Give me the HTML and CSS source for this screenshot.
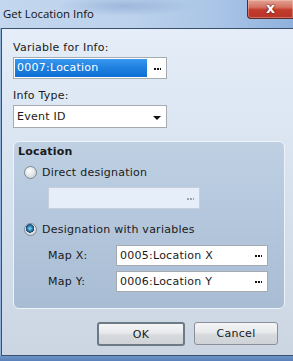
FILE: index.html
```html
<!DOCTYPE html>
<html>
<head>
<meta charset="utf-8">
<link rel="stylesheet" href="styles.css">
</head>
<body>
<div class="window">
  <div class="titlebar">
    <span class="title">Get Location Info</span>
    <div class="close"><span class="x">x</span></div>
  </div>
  <div class="client">
    <div class="label first">Variable for Info:</div>
    <div class="field">
      <span class="sel">0007:Location</span>
      <span class="dots"></span>
    </div>
    <div class="label second">Info Type:</div>
    <div class="field combo">
      <span class="val">Event ID</span>
      <span class="arrow"></span>
    </div>
    <div class="group">
      <div class="gtitle">Location</div>
      <div class="radio-row r1"><span class="radio"></span><span>Direct designation</span></div>
      <div class="field disabled"><span class="val"></span><span class="dots grey"></span></div>
      <div class="radio-row r2"><span class="radio on"></span><span>Designation with variables</span></div>
      <div class="maps">
        <div class="map-row"><span class="mlabel">Map X:</span><div class="field mfield"><span class="val">0005:Location X</span><span class="dots"></span></div></div>
        <div class="map-row"><span class="mlabel">Map Y:</span><div class="field mfield"><span class="val">0006:Location Y</span><span class="dots"></span></div></div>
      </div>
    </div>
    <div class="buttons">
      <div class="btn ok">OK</div>
      <div class="btn cancel">Cancel</div>
    </div>
  </div>
  <div class="bottom"></div>
</div>
</body>
</html>
```

FILE: styles.css
```css
html, body {
  margin: 0;
  padding: 0;
}
body {
  width: 293px;
  height: 361px;
  overflow: hidden;
  background: #8fb1da;
  font-family: "DejaVu Sans", Verdana, sans-serif;
  font-size: 11px;
  color: #1a1a1a;
}
.window {
  display: flex;
  flex-direction: column;
  width: 293px;
  height: 361px;
}
.titlebar {
  height: 28px;
  display: flex;
  align-items: flex-start;
  justify-content: space-between;
  background:
    radial-gradient(ellipse 70px 10px at 125px 6px, rgba(120,150,200,0.45), rgba(120,150,200,0) 100%),
    linear-gradient(90deg, #c3d7ee 0%, #bcd2ec 45%, #a9c4e6 75%, #8fb1dc 100%);
}
.title {
  font-family: "Open Sans", "Noto Sans", sans-serif;
  font-size: 11.4px;
  color: #111;
  margin: 6px 0 0 3px;
  line-height: 16px;
}
.close {
  width: 45px;
  height: 18px;
  border: 1px solid #5a2a28;
  border-top: none;
  border-right: none;
  border-bottom-left-radius: 4px;
  background: linear-gradient(180deg, #e2a394 0%, #d57262 40%, #c23a2b 55%, #b8342a 100%);
  display: flex;
  align-items: center;
  justify-content: center;
  box-shadow: inset 0 0 0 1px rgba(255,220,210,0.35);
}
.x {
  font-family: "DejaVu Sans", sans-serif;
  font-weight: bold;
  font-size: 14px;
  color: #fff;
  line-height: 14px;
  margin-top: -3px;
  text-shadow: 0 0 2px #5a1a10, 0 0 1px #5a1a10;
}
.client {
  margin-left: 1px;
  border-left: 1px solid #3b506c;
  border-top: 1px solid #3b506c;
  border-bottom: 1px solid #3b506c;
  height: 326px;
  padding-left: 11px;
  background: linear-gradient(180deg, #e4edf8 0%, #d9e4f0 40%, #cbd6e2 100%);
  display: flex;
  flex-direction: column;
}
.bottom {
  flex: 1;
  background: linear-gradient(180deg, #6e93c6, #5a80bc);
}
.label {
  line-height: 13px;
  height: 13px;
  letter-spacing: 0.25px;
}
.label.first { margin-top: 12px; }
.label.second { margin-top: 10px; }
.field {
  margin-top: 3px;
  width: 152px;
  height: 20px;
  border: 1px solid #a6abb2;
  background: #fff;
  display: flex;
  align-items: center;
  justify-content: space-between;
}
.sel {
  margin-left: 1px;
  width: 130px;
  height: 18px;
  background: linear-gradient(180deg, #3a98ee 0%, #1f80e0 50%, #0e6fd4 100%);
  color: #fff;
  line-height: 18px;
  padding-left: 2px;
  letter-spacing: 0.25px;
}
.val {
  padding-left: 3px;
  letter-spacing: 0.25px;
  line-height: 18px;
}
.dots {
  width: 7px;
  height: 2px;
  margin-right: 5px;
  margin-top: 1px;
  background:
    linear-gradient(90deg, #111 0 2px, transparent 2px 3px, #111 3px 5px, transparent 5px 6px, #111 6px 7px);
}
.dots.grey {
  background:
    linear-gradient(90deg, #9aa3ad 0 2px, transparent 2px 3px, #9aa3ad 3px 5px, transparent 5px 6px, #9aa3ad 6px 7px);
}
.combo { height: 21px; }
.arrow {
  width: 0;
  height: 0;
  border-left: 4px solid transparent;
  border-right: 4px solid transparent;
  border-top: 4px solid #111;
  margin-right: 5px;
  margin-top: 2px;
}
.group {
  margin-top: 13px;
  width: 266px;
  height: 166px;
  border: 1px solid #eef3f9;
  border-radius: 6px;
  background: linear-gradient(180deg, #bfd0e3 0%, #b3c6dc 50%, #a8bcd3 100%);
  padding-left: 4px;
  display: flex;
  flex-direction: column;
}
.group .gtitle {
  font-weight: bold;
  margin-top: 3px;
  line-height: 13px;
  letter-spacing: 0.2px;
}
.radio-row {
  display: flex;
  align-items: center;
  height: 16px;
  letter-spacing: 0.25px;
}
.radio-row.r1 { margin-top: 6px; }
.radio-row.r2 { margin-top: 12px; }
.radio {
  width: 11px;
  height: 11px;
  border-radius: 50%;
  border: 1px solid #7f8790;
  background: radial-gradient(circle at 40% 35%, #ffffff 0%, #e6e8ea 45%, #c3c8cd 100%);
  margin-left: 6px;
  margin-right: 5px;
}
.radio.on {
  background:
    radial-gradient(circle at 45% 40%, #9fe0f8 0%, #3a93c4 22%, #1b4f7a 42%, #1b4f7a 46%, transparent 50%),
    radial-gradient(circle at 40% 35%, #ffffff 0%, #e6e8ea 45%, #c3c8cd 100%);
}
.field.disabled {
  margin-top: 7px;
  margin-left: 30px;
  width: 150px;
  height: 20px;
  background: #e6eff9;
  border-color: #c6cfd9;
}
.maps {
  margin-top: 8px;
  display: flex;
  flex-direction: column;
  gap: 5px;
}
.map-row {
  display: flex;
  align-items: center;
}
.mlabel {
  margin-left: 30px;
  width: 68px;
  letter-spacing: 0.25px;
}
.field.mfield {
  margin-top: 0;
  width: 150px;
  height: 19px;
}
.buttons {
  margin-top: 13px;
  display: flex;
  gap: 9px;
  padding-left: 84px;
}
.btn {
  height: 21px;
  border: 1px solid #8c9096;
  border-radius: 3px;
  background: linear-gradient(180deg, #f4f5f6 0%, #e7e9eb 45%, #d7dadd 55%, #cfd3d7 100%);
  display: flex;
  align-items: center;
  justify-content: center;
  letter-spacing: 0.3px;
  color: #1a1a1a;
}
.btn.ok {
  width: 84px;
  border: 2px solid #6c7a88;
  height: 20px;
}
.btn.cancel {
  width: 82px;
}
```
